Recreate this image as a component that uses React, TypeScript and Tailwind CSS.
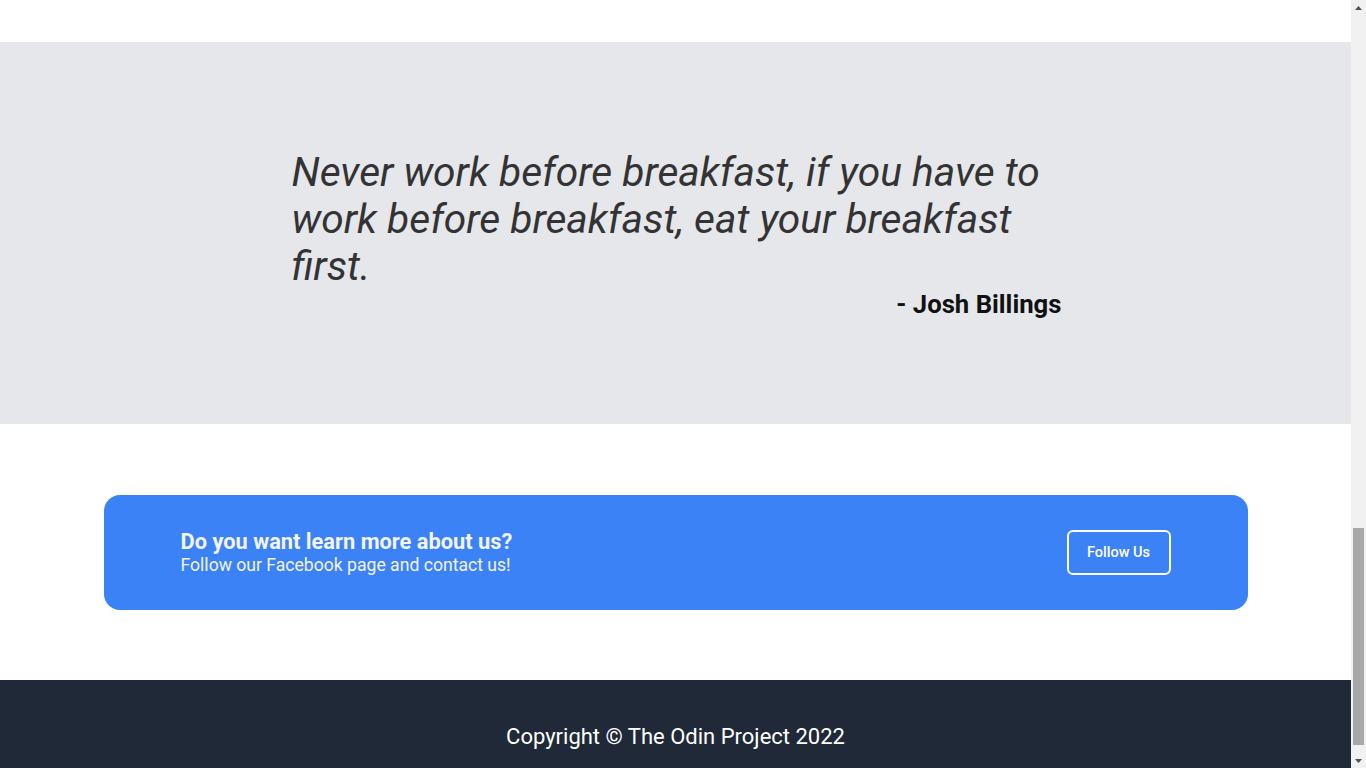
import React from "react";

const font = { fontFamily: "Roboto, 'Liberation Sans', sans-serif" };

function QuoteSection() {
    return (
        <section className="bg-[#e5e7eb] pt-[107px] pb-[104px]">
            <div className="max-w-3xl mx-auto">
                <p className="text-[40.7px] italic leading-[47px] text-[#333]">
                    Never work before breakfast, if you have to work before breakfast, eat your breakfast first.
                </p>
                <p className="text-right text-[25.7px] font-bold leading-8 -mt-[2px] mr-[-2px] text-[#111]">- Josh Billings</p>
            </div>
        </section>
    );
}

function CallToAction() {
    return (
        <section className="bg-white pt-[71px] pb-[70px]">
            <div className="w-[1144px] mx-auto h-[115px] bg-[#3b82f6] rounded-2xl flex items-center justify-between px-[77px]">
                <div>
                    <h3 className="text-[21.8px] font-bold leading-6 text-gray-100">Do you want learn more about us?</h3>
                    <p className="text-[17.6px] leading-[22px] text-gray-100">Follow our Facebook page and contact us!</p>
                </div>
                <button className="w-[104px] h-[45px] border-2 border-white rounded-md text-[14.5px] font-medium text-white">
                    Follow Us
                </button>
            </div>
        </section>
    );
}

// browser scrollbar, page scrolled to the bottom
function Scrollbar() {
    return (
        <div className="w-[15px] shrink-0 bg-[#f1f1f1] flex flex-col">
            <div className="h-[15px] flex items-center justify-center">
                <svg width="7" height="4" viewBox="0 0 7 4"><path d="M3.5 0L7 4H0z" fill="#505050" /></svg>
            </div>
            <div className="flex-1 flex flex-col justify-end pb-[8px]">
                <div className="h-[217px] mx-[2px] bg-[#a8a8a8]" />
            </div>
            <div className="h-[15px] flex items-center justify-center">
                <svg width="7" height="4" viewBox="0 0 7 4"><path d="M0 0H7L3.5 4z" fill="#505050" /></svg>
            </div>
        </div>
    );
}

export default function App() {
    return (
        <div className="h-screen flex bg-white" style={font}>
            <div className="flex-1 overflow-hidden flex flex-col-reverse">
                <div>
                    {/* content above, scrolled out of view */}
                    <div className="h-[1793px] bg-white" />
                    <QuoteSection />
                    <CallToAction />
                    <footer className="bg-[#1f2937] pt-[43px] pb-[17px] text-center">
                        <p className="text-[22px] leading-7 text-white">Copyright © The Odin Project 2022</p>
                    </footer>
                </div>
            </div>
            <Scrollbar />
        </div>
    );
}
